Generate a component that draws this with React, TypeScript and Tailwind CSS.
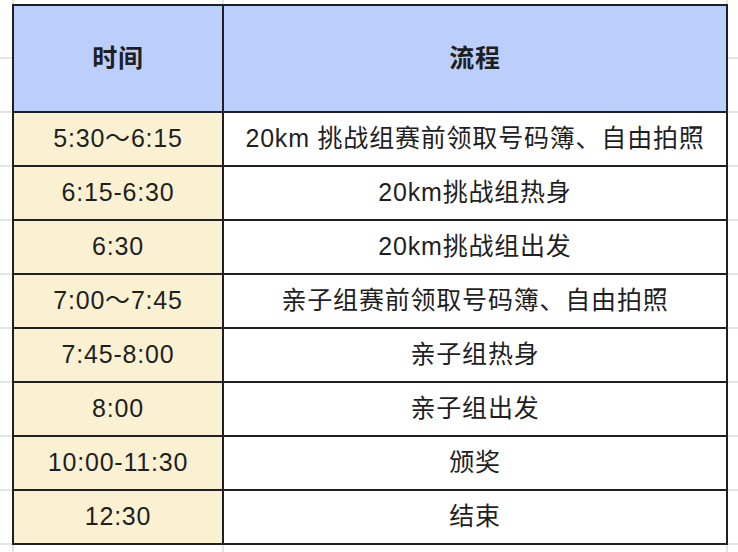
const rows = [
  { time: "5:30～6:15", step: "20km 挑战组赛前领取号码簿、自由拍照" },
  { time: "6:15-6:30", step: "20km挑战组热身" },
  { time: "6:30", step: "20km挑战组出发" },
  { time: "7:00～7:45", step: "亲子组赛前领取号码簿、自由拍照" },
  { time: "7:45-8:00", step: "亲子组热身" },
  { time: "8:00", step: "亲子组出发" },
  { time: "10:00-11:30", step: "颁奖" },
  { time: "12:30", step: "结束" },
];

const Strip = ({ h }: { h: string }) => (
  <div className={`flex ${h}`}>
    <div className="w-[12px]" />
    <div className="w-[210px] border-l-2 border-[#e4e5e7]" />
    <div className="w-[504px] border-l-2 border-[#e4e5e7]" />
    <div className="flex-1 border-l-2 border-[#e4e5e7]" />
  </div>
);

const Gutter = ({ w }: { w: string }) => (
  <div className={`flex flex-col ${w}`}>
    <div className="h-[55px] border-b-2 border-[#e4e5e7]" />
    {Array.from({ length: 9 }).map((_, i) => (
      <div key={i} className="h-[54px] border-b-2 border-[#e4e5e7]" />
    ))}
  </div>
);

export default function App() {
  return (
    <div className="w-[738px] h-[552px] overflow-hidden bg-white text-[25px] tracking-[0.8px] text-[#1f1f1f] font-['Liberation_Sans','Noto_Sans_CJK_SC',sans-serif]">
      <Strip h="h-[4px]" />
      <div className="flex">
        <Gutter w="w-[12px]" />
        <div className="w-[716px] border-2 border-[#1f2024]">
          <div className="flex h-[105px] bg-[#bccffc] font-bold">
            <div className="w-[210px] border-r-2 border-[#1f2024] flex items-center justify-center">时间</div>
            <div className="flex-1 flex items-center justify-center">流程</div>
          </div>
          {rows.map((r) => (
            <div key={r.time} className="flex h-[54px] border-t-2 border-[#1f2024]">
              <div className="w-[210px] border-r-2 border-[#1f2024] bg-[#faf1d3] flex items-center justify-center">
                {r.time}
              </div>
              <div className="flex-1 flex items-center justify-center">{r.step}</div>
            </div>
          ))}
        </div>
        <Gutter w="flex-1" />
      </div>
      <Strip h="h-[7px]" />
    </div>
  );
}
